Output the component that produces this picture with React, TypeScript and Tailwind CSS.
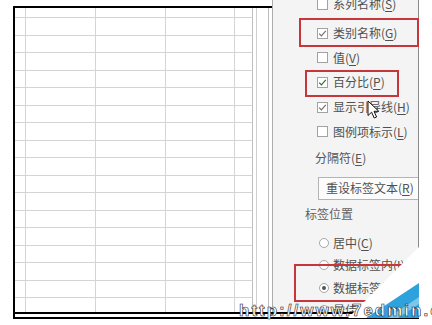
const CJK = { fontFamily: '"Noto Sans CJK SC", "Microsoft YaHei", sans-serif' }

function Check({ tone }: { tone: string }) {
  return (
    <svg width="9" height="9" viewBox="0 0 9 9" fill="none">
      <path d="M1.2 4.6 L3.4 6.8 L7.8 1.8" stroke={tone} strokeWidth="1.2" />
    </svg>
  )
}

function CheckRow({ label, hot, checked, tone = '#707070' }: { label: string; hot: string; checked?: boolean; tone?: string }) {
  return (
    <div className="flex h-[24.6px] shrink-0 items-center gap-[5px] pl-[44px]">
      <div className="flex h-[11px] w-[11px] items-center justify-center border border-[#a2a2a2] bg-white">
        {checked && <Check tone={tone} />}
      </div>
      <span className="text-[12px] leading-none text-[#505050] whitespace-nowrap">
        {label}(<span className="underline underline-offset-2">{hot}</span>)
      </span>
    </div>
  )
}

function RadioRow({ label, hot, on }: { label: string; hot: string; on?: boolean }) {
  return (
    <div className="flex h-[22.3px] shrink-0 items-center gap-[4px] pl-[46px]">
      <div className="flex h-[10px] w-[10px] items-center justify-center rounded-full border border-[#a8a8a8] bg-white">
        {on && <div className="h-[4px] w-[4px] rounded-full bg-[#555]" />}
      </div>
      <span className="text-[12px] leading-none text-[#505050] whitespace-nowrap">
        {label}(<span className="underline underline-offset-2">{hot}</span>)
      </span>
    </div>
  )
}

const cols = ['w-[11px]', 'w-[70px]', 'w-[70px]', 'w-[69px]']

function GridRow({ h }: { h: string }) {
  return (
    <div className={`flex shrink-0 ${h}`}>
      {cols.map((w, i) => (
        <div key={i} className={`${w} shrink-0 border-r border-b border-[#d4d4d4]`} />
      ))}
      <div className="w-[18px] shrink-0 border-r border-b border-r-[#bdbdbd] border-b-[#d4d4d4]" />
      <div className="w-[4px] shrink-0 border-r border-[#d0d0d0]" />
      <div className="w-[12px] shrink-0 border-r border-[#bcbcbc]" />
      <div className="w-[3px] shrink-0" />
    </div>
  )
}

export default function App() {
  return (
    <div className="relative h-[325px] w-[432px] overflow-hidden bg-white" style={CJK}>
      <div className="ml-[13px] mt-[6px] w-[406px] border-l-2 border-black">
        <div className="flex h-[306px]">
          {/* sheet */}
          <div className="flex w-[257px] shrink-0 flex-col overflow-hidden border-t-2 border-black">
            <GridRow h="h-[10px]" />
            {Array.from({ length: 18 }).map((_, i) => (
              <GridRow key={i} h="h-[17.5px]" />
            ))}
          </div>

          {/* format pane */}
          <div className="-mt-[6px] flex h-[312px] w-[147px] shrink-0 flex-col overflow-hidden border-x border-l-[#acacac] border-r-[#8a8a8a] bg-[#f4f4f4]">
            <div className="-mt-[8px]" />
            <CheckRow label="系列名称" hot="S" />
            <div className="h-[4.4px] shrink-0" />
            <CheckRow label="类别名称" hot="G" checked />
            <CheckRow label="值" hot="V" />
            <CheckRow label="百分比" hot="P" checked tone="#2f6b3f" />
            <CheckRow label="显示引导线" hot="H" checked />
            <CheckRow label="图例项标示" hot="L" />
            <div className="mt-[2px] flex h-[24px] shrink-0 items-center pl-[42px] text-[12px] text-[#555]">
              分隔符(<span className="underline underline-offset-2">E</span>)
            </div>
            <div className="ml-[45px] mt-[7px] flex h-[23px] w-[112px] shrink-0 items-center border border-[#b4b4b4] bg-[#fcfcfc] pl-[7px] text-[12px] text-[#505050] whitespace-nowrap">
              重设标签文本(<span className="underline underline-offset-2">R</span>)
            </div>
            <div className="mt-[2px] flex h-[24px] shrink-0 items-center pl-[32px] text-[12px] text-[#606060]">
              标签位置
            </div>
            <div className="mt-[6px]" />
            <RadioRow label="居中" hot="C" />
            <RadioRow label="数据标签内" hot="I" />
            <RadioRow label="数据标签外" hot="O" on />
            <RadioRow label="最佳匹配" hot="F" />
          </div>
        </div>
        <div className="h-[2px] bg-black" />
        <div className="h-[3px]" />
        <div className="h-[2px] bg-black" />
      </div>

      {/* highlight boxes */}
      <div className="absolute left-[299px] top-[18px] h-[29px] w-[120px] border-2 border-[#c5373b]" />
      <div className="absolute left-[305px] top-[70px] h-[27px] w-[94px] border-2 border-[#c5373b]" />

      {/* watermark band + corner */}
      <svg className="absolute left-0 top-0" width="432" height="325" viewBox="0 0 432 325">
        <polyline points="405,265 295,265 295,301 372,301" fill="none" stroke="#c5373b" strokeWidth="2" />
        <polygon points="348,318 420,246 420,318" fill="#ffffff" />
        <polygon points="366,318 419,283 419,318" fill="#2ea2dc" />
        <polygon points="388,318 419,297 419,304 398,318" fill="#7cc6ea" />
      </svg>

      <div className="absolute left-[239px] top-[302px] font-['Liberation_Sans',sans-serif] text-[17px] font-bold leading-none tracking-[2px] text-white [-webkit-text-stroke:0.6px_#222]">
        http://www.7edmin.com
      </div>

      {/* mouse pointer */}
      <svg className="absolute left-[367px] top-[100px]" width="13" height="20" viewBox="0 0 13 20">
        <path d="M1 1 L1 15.5 L4.6 12.2 L7.2 18 L9.6 17 L7 11.3 L11.8 11.3 Z" fill="#fff" stroke="#111" strokeWidth="1" strokeLinejoin="round" />
      </svg>
    </div>
  )
}
